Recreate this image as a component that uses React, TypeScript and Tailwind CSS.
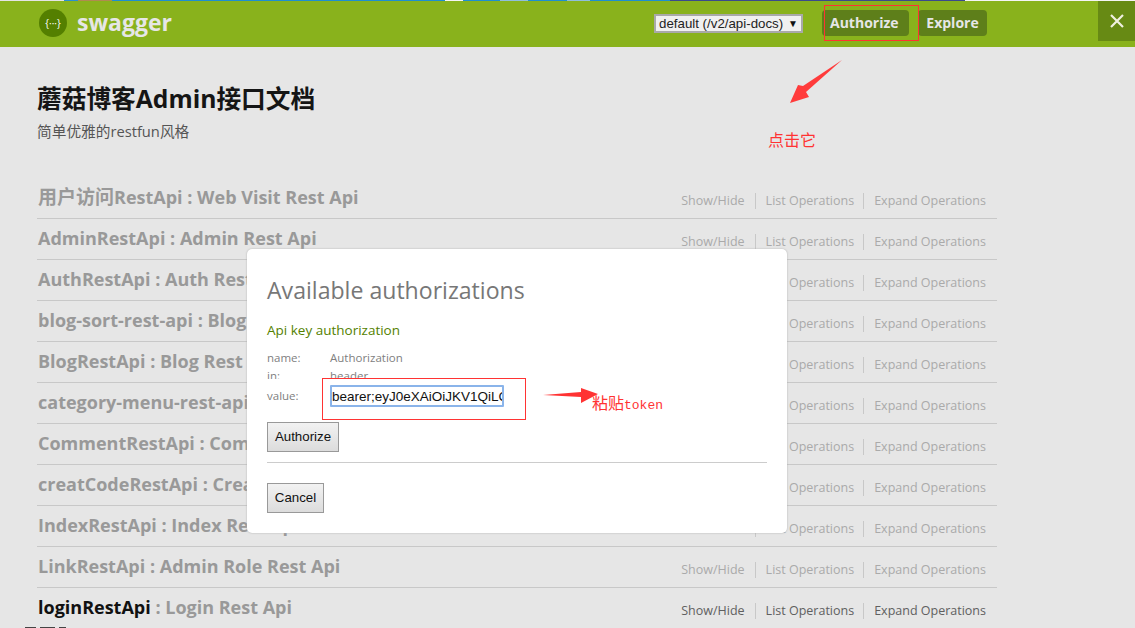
const sans = "font-['Open_Sans','Noto_Sans_CJK_SC',sans-serif]";

const apis = [
  ["用户访问RestApi", "Web Visit Rest Api"],
  ["AdminRestApi", "Admin Rest Api"],
  ["AuthRestApi", "Auth Rest Api"],
  ["blog-sort-rest-api", "Blog Sort Rest Api"],
  ["BlogRestApi", "Blog Rest Api"],
  ["category-menu-rest-api", "Category Menu Rest Api"],
  ["CommentRestApi", "Comment Rest Api"],
  ["creatCodeRestApi", "Creat Code Rest Api"],
  ["IndexRestApi", "Index Rest Api"],
  ["LinkRestApi", "Admin Role Rest Api"],
  ["loginRestApi", "Login Rest Api"],
];

// bit of the browser page showing above the header
const strip = [
  "w-[64px] bg-[#e4e4e4]",
  "w-[14px] bg-[#2a8fd0]",
  "w-[34px] bg-[#b08a50]",
  "w-[333px] bg-[#1e8fd0]",
  "w-[18px] bg-[#f4f4f4]",
  "w-[37px] bg-[#1e8fd0]",
  "w-[28px] bg-[#8fbfdc]",
  "w-[39px] bg-[#1e8fd0]",
  "w-[23px] bg-[#8fbfdc]",
  "w-[80px] bg-[#1e8fd0]",
  "w-[295px] bg-[#3b4a8c]",
  "w-[170px] bg-[#f4f4f4]",
];

const ApiRow = ({ name, desc, active }: { name: string; desc: string; active: boolean }) => {
  // chinese prefix sits a bit bigger than the latin in the original
  const cjk = name.match(/^[^\x00-\x7f]+/)?.[0] ?? "";
  return (
    <div className="flex h-[41px] items-center justify-between border-b border-[#c8c8c8] pr-[11px] pb-[1px] pl-[1px]">
      <h2 className="text-[18px] font-bold text-[#999999]">
        <span className={active ? "text-[#111111]" : ""}>
          {cjk && <span className="text-[19px]">{cjk}</span>}
          {name.slice(cjk.length)}
        </span>{" "}
        : {desc}
      </h2>
      <ul className={`mt-[6px] flex items-center text-[12.5px] leading-[16px] ${active ? "text-[#606060]" : "text-[#aaaaaa]"}`}>
        <li className="border-r border-[#c8c8c8] pr-[10px]">Show/Hide</li>
        <li className="border-r border-[#c8c8c8] pr-[9px] pl-[10px]">List Operations</li>
        <li className="pl-[10px]">Expand Operations</li>
      </ul>
    </div>
  );
};

const Header = () => (
  <header className="flex h-[46px] shrink-0 bg-[#89b21c]">
    <div className="ml-[39px] flex items-center gap-[10px] pb-[2px]">
      <div className="flex h-[28px] w-[28px] items-center justify-center rounded-full bg-[#547f00] text-[10px] text-white">
        {"{···}"}
      </div>
      <span className="pb-[2px] text-[23px] leading-none font-bold text-[#e6e6e6]">swagger</span>
    </div>
    <div className="ml-auto flex items-start pt-[9px]">
      <div className="mt-[4px] mr-[19px] flex h-[19px] w-[149px] items-center justify-between border-2 border-[#a9a9a9] bg-[#f0f0f0] px-[3px] font-['Liberation_Sans',sans-serif] text-[13.3px] text-[#222222]">
        default (/v2/api-docs)
        <span className="text-[10px] leading-none text-[#111111]">▼</span>
      </div>
      <button className="mr-[9px] h-[26px] w-[87px] rounded-[4px] bg-[#5e7f1a] pb-[2px] pl-[8px] text-left text-[14px] font-bold text-[#e6e6e6]">
        Authorize
      </button>
      <button className="h-[26px] w-[69px] rounded-[4px] bg-[#5e7f1a] pb-[2px] text-[14px] font-bold text-[#e6e6e6]">
        Explore
      </button>
      <div className="mt-[-9px] ml-[111px] flex h-[40px] w-[37px] items-center justify-center bg-[#678a14]">
        <svg width="14" height="14" viewBox="0 0 14 14" stroke="#f0f0e0" strokeWidth="2.2">
          <path d="M1 1 13 13M13 1 1 13" />
        </svg>
      </div>
    </div>
  </header>
);

const AuthModal = () => (
  <div className="absolute top-[249px] left-[247px] h-[284px] w-[540px] rounded-[5px] bg-white px-[20px] pt-[25px] shadow-[0_0_2px_#aaa]">
    <h3 className="text-[23.1px] leading-[32px] text-[#777777]">Available authorizations</h3>
    <h4 className="mt-[14px] text-[13.5px] leading-[20px] text-[#547f00]">Api key authorization</h4>
    <div className="mt-[9px] grid grid-cols-[63px_1fr] text-[11.5px] leading-[18px] text-[#808080]">
      <span>name:</span>
      <span>Authorization</span>
      <span>in:</span>
      <span>header</span>
    </div>
    <div className="relative mt-[-6px] grid grid-cols-[63px_1fr] items-center bg-white pt-[6px] text-[11.5px] text-[#808080]">
      <span>value:</span>
      <input
        readOnly
        value="bearer;eyJ0eXAiOiJKV1QiLCJhbGciOiJIUzI1NiJ9"
        className="h-[22px] w-[174px] rounded-[1px] border-2 border-[#8ab4ea] bg-white pl-0 font-['Liberation_Sans',sans-serif] text-[13.5px] text-[#111111] outline-none"
      />
    </div>
    <button className="mt-[15px] block h-[30px] w-[72px] border border-[#999999] bg-gradient-to-b from-[#f2f2f2] to-[#dcdcdc] font-['Liberation_Sans',sans-serif] text-[13.3px] text-[#111111]">
      Authorize
    </button>
    <div className="mt-[10px] border-t border-[#cccccc]" />
    <button className="mt-[20px] block h-[30px] w-[57px] border border-[#999999] bg-gradient-to-b from-[#f2f2f2] to-[#dcdcdc] font-['Liberation_Sans',sans-serif] text-[13.3px] text-[#111111]">
      Cancel
    </button>
  </div>
);

// the red marks someone drew on top of the screenshot
const Annotations = () => (
  <>
    <div className="absolute top-[5px] left-[824px] h-[36px] w-[95px] border border-[#ff3333]" />
    <svg className="absolute top-[58px] left-[788px]" width="56" height="46" viewBox="0 0 56 46">
      <path d="M54 2 15 28 10 27 2 45 21 39 18 34Z" fill="#ff3b3b" />
    </svg>
    <span className="absolute top-[129px] left-[768px] font-['Noto_Sans_CJK_SC',sans-serif] text-[16px] leading-[20px] text-[#ff3333]">
      点击它
    </span>
    <div className="absolute top-[378px] left-[322px] h-[42px] w-[204px] border border-[#ff3333]" />
    <svg className="absolute top-[386px] left-[542px]" width="58" height="18" viewBox="0 0 58 18">
      <path d="M1 9 39 6 39 2 56 8 39 17 39 11Z" fill="#ff3333" />
    </svg>
    <span className="absolute top-[392px] left-[592px] font-['Noto_Sans_CJK_SC',serif] text-[16px] leading-[20px] text-[#ff3333]">
      粘贴<span className="font-['Liberation_Mono',monospace] text-[13px]">token</span>
    </span>
  </>
);

export default function App() {
  return (
    <div className={`relative flex h-[628px] w-[1135px] flex-col overflow-hidden bg-[#e6e6e6] ${sans}`}>
      <div className="flex h-[1px] shrink-0">
        {strip.map((c) => (
          <div key={c} className={c} />
        ))}
      </div>
      <Header />
      <main className="ml-[37px] w-[960px]">
        <div className="mt-[36px] mb-[37px]">
          <h1 className="text-[24.7px] leading-[32px] font-bold text-[#151515]">蘑菇博客Admin接口文档</h1>
          <p className="mt-[6px] text-[14.7px] leading-[20px] text-[#555555]">简单优雅的restfun风格</p>
        </div>
        <div>
          {apis.map(([name, desc], i) => (
            <ApiRow key={name} name={name} desc={desc} active={i === apis.length - 1} />
          ))}
        </div>
      </main>
      <AuthModal />
      <Annotations />
      {/* cut off scraps of text along the bottom edge */}
      <div className="absolute bottom-0 left-0 flex h-[1px] gap-[4px]">
        <div className="ml-[25px] w-[11px] bg-[#444444]" />
        <div className="w-[15px] bg-[#444444]" />
        <div className="w-[7px] bg-[#444444]" />
      </div>
    </div>
  );
}
